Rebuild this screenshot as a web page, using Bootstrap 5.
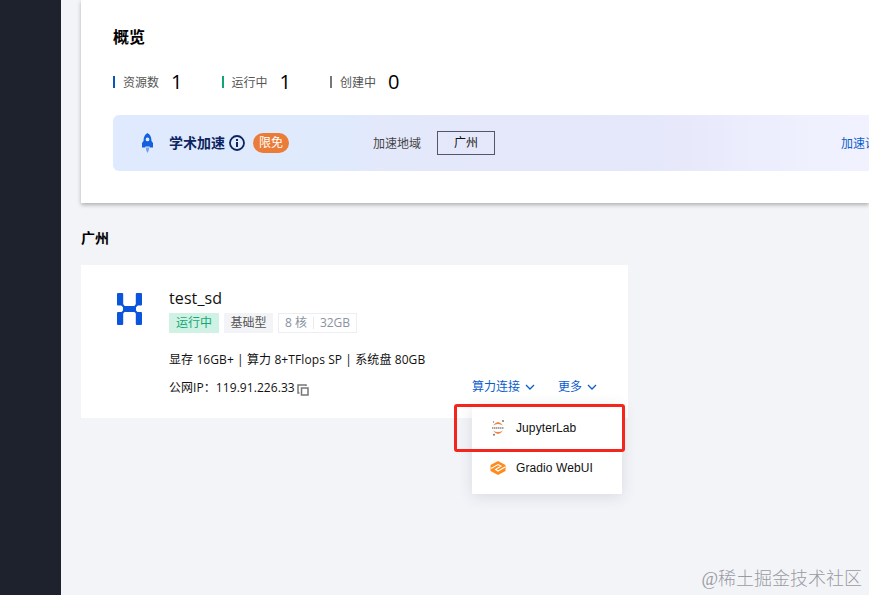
<!DOCTYPE html>
<html lang="zh-CN">
<head>
<meta charset="utf-8">
<meta name="viewport" content="width=device-width, initial-scale=1">
<title>概览</title>
<link href="https://cdn.jsdelivr.net/npm/bootstrap@5.3.0/dist/css/bootstrap.min.css" rel="stylesheet">
<style>
body{font:12px/20px "Open Sans","Noto Sans CJK SC",sans-serif;color:#111;background:#f3f4f8;height:595px}
.side{width:61px;background:#1e222d}
.content-area{padding-left:20px;background:#f3f4f8}
.overview{height:203px;padding:25px 0 0 32px;box-shadow:0 2px 4px rgba(0,0,0,.28);white-space:nowrap}
.overview h1{font-size:16px;line-height:24px;font-weight:700;color:#000}
.stats{height:24px;margin-top:21px}
.stat{width:108.5px;color:#555}
.stat i{width:2px;height:12px;margin-right:8px}
.stat span{padding-top:2px}
.stat b{font-size:20px;font-weight:400;color:#000;margin-left:12px}
.accel{height:56px;margin-top:21px;width:800px;border-radius:6px;padding-left:28px;background:linear-gradient(90deg,#dfeafe 0,#e0eafd 235px,#e4e8fb 270px,#e5e7fa 540px,#eff0fe 690px,#f3f3ff 100%)}
.accel h2{font-size:14px;line-height:20px;font-weight:700;color:#0c2560;margin-left:15px}
.free{background:#ea7c37;border-radius:10px;width:36px;height:20px;margin-left:8px}
.region-label{margin-left:84px;width:64px;color:#444;padding-top:2px}
.region-btn{width:58px;height:24px;border:1px solid #51566b;color:#111}
.help{margin-left:346px;color:#0a5dcc;padding-top:2px}
.zone{font-size:14px;line-height:20px;font-weight:700;color:#000;margin-top:25px}
.server{width:547px;height:153px;margin-top:17px;padding:23px 0 0 35px}
.server h3{font-size:16px;line-height:20px;font-weight:400;color:#111;letter-spacing:.1px}
.info{margin-left:26px}
.tags{margin-top:5px;height:20px;line-height:19px}
.tag{height:20px}
.run{width:50px;background:#cff2e4;color:#14a876}
.base{width:49px;margin-left:5px;background:#f3f4f7;color:#555}
.spec{width:79px;margin-left:5px;border:1px solid #eceef3;color:#8a92a3;line-height:18px}
.spec span+span{border-left:1px solid #e7e9ee;height:12px;line-height:11px;padding-left:6px;margin-left:6px}
.spec-line{margin-top:17px;width:300px;white-space:nowrap;letter-spacing:.09px}
.ip-line{margin-top:8px;white-space:nowrap}
.ip{width:140px;letter-spacing:.06px}
.ip svg{margin:3px 0 0 2px}
.links{width:126px;margin-left:163px;margin-top:-1px;color:#0a5dcc}
.more{margin-left:22px}
.menu-list{left:391px;top:139px;width:150px;height:90px;box-shadow:0 3px 14px rgba(40,50,80,.12);font:12px/20px "Liberation Sans",sans-serif;color:#111;letter-spacing:.1px;padding:14px 0 0 18px}
.menu-list .entry{height:20px;margin-bottom:20px}
.menu-list svg{margin-right:9px}
.focus-box{left:373px;top:139px;width:171px;height:48px;border:3px solid #f3251c;border-radius:3px}
.credit{right:7px;bottom:4px;font:300 18px/24px "Liberation Serif","Noto Sans CJK SC",serif;color:#999ba1}
</style>
</head>
<body class="d-flex overflow-hidden position-relative">
<aside class="side flex-shrink-0"></aside>
<main class="content-area flex-grow-1 overflow-hidden">
<section class="overview bg-white">
 <h1 class="m-0">概览</h1>
 <div class="stats d-flex align-items-center">
  <div class="stat d-flex align-items-center"><i style="background:#0a55b8"></i><span>资源数</span><b>1</b></div>
  <div class="stat d-flex align-items-center"><i style="background:#13a374"></i><span>运行中</span><b>1</b></div>
  <div class="stat d-flex align-items-center"><i style="background:#777"></i><span>创建中</span><b>0</b></div>
 </div>
 <div class="accel d-flex align-items-center">
  <svg width="13" height="20" viewBox="0 0 13 20"><path fill="#1260df" fill-rule="evenodd" d="M6.500 0C9 1.500 10.500 4 10.500 8l1.500 2V14.500H9l-.5-1h-4l-.5 1H1V10l1.500-2c0-4 1.500-6.500 4-8zm0 4.500a1.900 1.900 0 1 0 0 3.800 1.900 1.900 0 0 0 0-3.800z"/><path fill="#73a5ef" d="M4.700 14.500h3.600l-.5 3-1.300 2.500-1.300-2.500z"/></svg>
  <h2 class="mb-0">学术加速</h2>
  <svg class="ms-1" width="16" height="16" viewBox="0 0 16 16"><circle cx="8" cy="8" r="7" fill="none" stroke="#0c2560" stroke-width="1.800"/><path fill="#0c2560" d="M7 4h2v2H7zM7 7h2v5H7z"/></svg>
  <span class="free text-white d-flex justify-content-center align-items-center">限免</span>
  <span class="region-label">加速地域</span>
  <span class="region-btn d-flex justify-content-center align-items-center">广州</span>
  <span class="help">加速说明</span>
 </div>
</section>
<h2 class="zone mb-0">广州</h2>
<section class="server bg-white position-relative d-flex">
 <svg class="mt-1 flex-shrink-0" width="27" height="34" viewBox="0 0 27 34"><g fill="#0a55dc"><rect x="1" y="1" width="6.200" height="12.500" rx="1"/><rect x="19.800" y="1" width="6.200" height="12.500" rx="1"/><rect x="1" y="20" width="6.200" height="13" rx="1"/><rect x="19.800" y="20" width="6.200" height="13" rx="1"/><rect x="7" y="14" width="13" height="6" rx="1"/><path d="M5 13l2-1 2 2.500L7.500 16zM22 13l-2-1-2 2.500 1.500 1.500zM5 20.500l2 1 2-2L7.500 18zM22 20.500l-2 1-2-2 1.500-1.500z"/></g></svg>
 <div class="info">
  <h3 class="mb-0">test_sd</h3>
  <div class="tags d-flex"><span class="tag run text-center">运行中</span><span class="tag base text-center">基础型</span><span class="tag spec d-flex align-items-center justify-content-center"><span>8 核</span><span>32GB</span></span></div>
  <div class="spec-line">显存 16GB+ | 算力 8+TFlops SP | 系统盘 80GB</div>
  <div class="d-flex ip-line">
   <span class="ip d-flex align-items-center">公网IP：119.91.226.33<svg width="12" height="12" viewBox="0 0 12 12" fill="none" stroke="#777" stroke-width="1.500"><path d="M2.500 9H1V1h8v1"/><path d="M4.500 4H11v7H4.500z"/></svg></span>
   <span class="links d-flex"><span class="conn">算力连接<svg class="ms-1" width="12" height="10" viewBox="0 0 12 10" fill="none" stroke="#0a5dcc" stroke-width="1.300"><path d="M2 2l4 4 4-4"/></svg></span><span class="more">更多<svg class="ms-1" width="12" height="10" viewBox="0 0 12 10" fill="none" stroke="#0a5dcc" stroke-width="1.300"><path d="M2 2l4 4 4-4"/></svg></span></span>
  </div>
 </div>
 <div class="menu-list bg-white position-absolute">
  <div class="entry d-flex align-items-center"><svg width="17" height="18" viewBox="0 0 17 18"><path fill="#ef8440" d="M3 6.500Q8-.5 13 6.500 8 3.500 3 6.500M3 11.500Q8 18.500 13 11.500 8 14.500 3 11.500"/><path stroke="#a5a5a8" stroke-width="2.200" stroke-dasharray="1.500 .5" d="M2 9h12"/><g fill="#777"><circle cx="3.500" cy="3" r=".7"/><circle cx="13" cy="2" r="1"/><circle cx="4" cy="15.700" r="1"/></g></svg><span>JupyterLab</span></div>
  <div class="entry d-flex align-items-center"><svg width="17" height="16" viewBox="0 0 17 16"><path fill="#ff8b1e" d="M8 1l7.500 4v6L8 15 .5 11V5z"/><path fill="none" stroke="#fff" stroke-width="1.100" d="M1 8.500L8 4.500l3 1.500-5.500 3.500L8 11l7-4"/></svg><span>Gradio WebUI</span></div>
 </div>
 <div class="focus-box position-absolute"></div>
</section>
</main>
<div class="credit position-absolute">@稀土掘金技术社区</div>
<script src="https://cdn.jsdelivr.net/npm/bootstrap@5.3.0/dist/js/bootstrap.bundle.min.js"></script>
</body>
</html>
